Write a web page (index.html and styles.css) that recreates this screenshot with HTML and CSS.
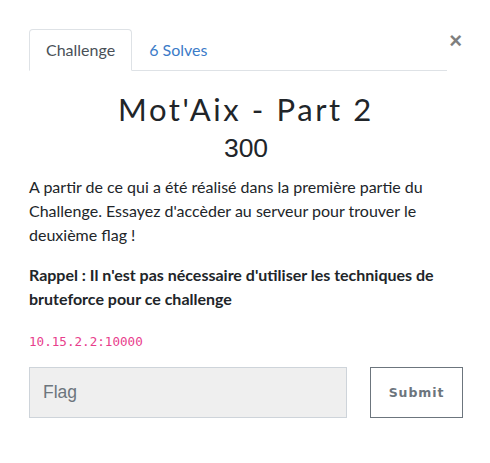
FILE: index.html
```html
<!DOCTYPE html>
<html lang="fr">
<head>
<meta charset="utf-8">
<title>Mot'Aix - Part 2</title>
<link rel="stylesheet" href="styles.css">
</head>
<body>
<div class="modal">
  <div class="header">
    <ul class="tabs">
      <li class="tab active">Challenge</li>
      <li class="tab">6 Solves</li>
    </ul>
    <span class="close">&times;</span>
  </div>
  <h2 class="title">Mot'Aix - Part 2</h2>
  <h4 class="value">300</h4>
  <p class="desc">A partir de ce qui a été réalisé dans la première partie du Challenge. Essayez d'accèder au serveur pour trouver le deuxième flag !</p>
  <p class="note">Rappel : Il n'est pas nécessaire d'utiliser les techniques de bruteforce pour ce challenge</p>
  <p class="addr"><code>10.15.2.2:10000</code></p>
  <div class="form">
    <div class="flag">Flag</div>
    <div class="submit">Submit</div>
  </div>
</div>
</body>
</html>
```
FILE: styles.css
```css
* { box-sizing: border-box; }
body {
  margin: 0;
  background: #fff;
  font-family: Lato, "Noto Sans", sans-serif;
  color: #212529;
}
.modal {
  padding: 29px 27px 0 29px;
}
.header {
  display: flex;
  align-items: flex-start;
}
.tabs {
  list-style: none;
  margin: 0;
  padding: 0;
  display: flex;
  flex: 1;
  border-bottom: 1px solid #dee2e6;
  height: 42px;
}
.tab {
  font-size: 16px;
  line-height: 24px;
  padding: 8px 16px;
  color: #3b7bc8;
  border: 1px solid transparent;
  border-radius: 4px 4px 0 0;
  height: 42px;
}
.tab.active {
  color: #495057;
  border-color: #dee2e6 #dee2e6 #fff;
  background: #fff;
}
.close {
  width: 15px;
  text-align: right;
  font-family: "Liberation Sans", Arial, sans-serif;
  font-size: 22px;
  font-weight: 700;
  line-height: 24px;
  color: #000;
  opacity: .5;
  margin-right: 1px;
}
.title {
  margin: 18px 0 0;
  text-align: center;
  font-family: Lato, sans-serif;
  font-weight: 400;
  font-size: 31px;
  letter-spacing: 2.6px;
  line-height: 40px;
}
.value {
  margin: 1px 0 0;
  text-align: center;
  font-family: "Liberation Sans", Arial, sans-serif;
  font-weight: 400;
  font-size: 26.5px;
  line-height: 36px;
}
.desc, .note {
  margin: 9px 0 16px;
  font-size: 16px;
  line-height: 24px;
}
.note {
  margin-top: 0;
  font-weight: 700;
}
.addr {
  margin: 0;
  padding-top: 3px;
  line-height: 20px;
}
code {
  font-family: "DejaVu Sans Mono", monospace;
  font-size: 12.6px;
  color: #e83e8c;
}
.form {
  display: flex;
  align-items: flex-start;
  gap: 23px;
  margin-top: 15px;
}
.flag {
  width: 318px;
  height: 51px;
  background: #efefef;
  border: 1px solid #ced4da;
  padding: 0 13px;
  font-family: "Liberation Sans", Arial, sans-serif;
  font-size: 17.5px;
  line-height: 49px;
  color: #6c757d;
}
.submit {
  width: 93px;
  height: 51px;
  border: 1px solid #6c757d;
  font-family: "DejaVu Sans", sans-serif;
  font-weight: 700;
  font-size: 12.5px;
  letter-spacing: 0.9px;
  color: #6c757d;
  display: flex;
  align-items: center;
  justify-content: center;
}
```
